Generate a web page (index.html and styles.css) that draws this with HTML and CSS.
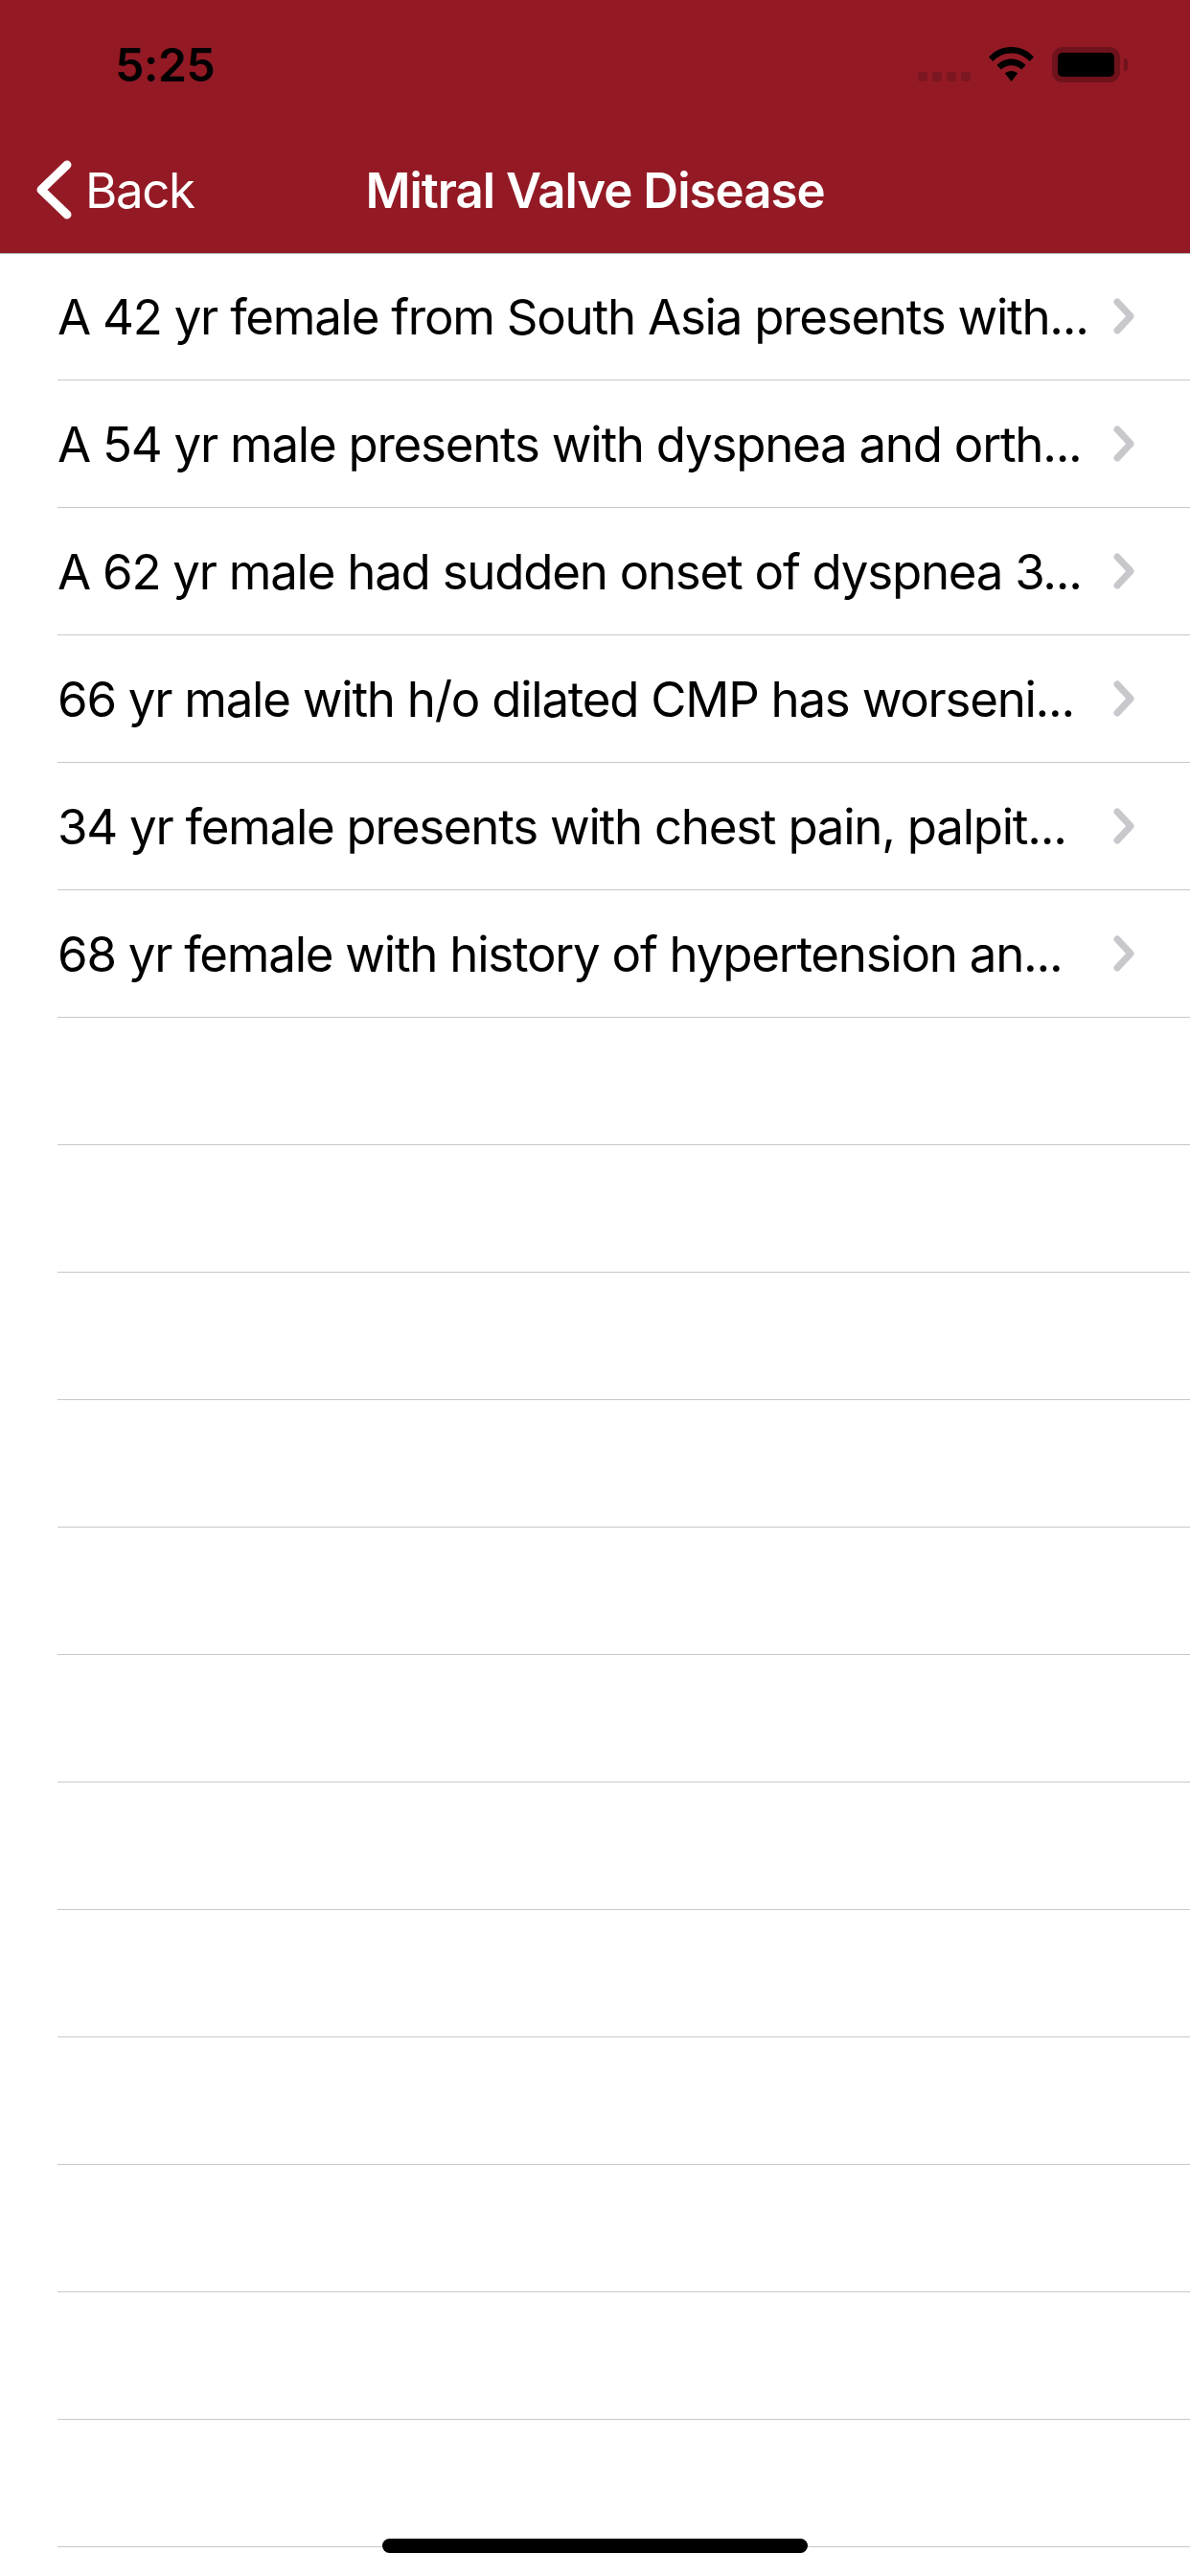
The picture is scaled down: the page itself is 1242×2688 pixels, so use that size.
FILE: index.html
```html
<!DOCTYPE html>
<html lang="en">
<head>
    <meta charset="UTF-8">
    <meta name="viewport" content="width=device-width, initial-scale=1.0">
    <title>Mitral Valve Disease</title>
    <link rel="stylesheet" href="styles.css">
</head>
<body>
    <header class="top-bar">
        <div class="status-bar">
            <span class="clock">5:25</span>
            <div class="status-icons">
                <div class="signal-dots"><i></i><i></i><i></i><i></i></div>
                <svg class="wifi" width="47" height="36" viewBox="0 0 47 36">
                    <path d="M0 10.5C6 4 14 0 23.5 0S41 4 47 10.5L42.6 15C37.6 9.8 31 6.6 23.5 6.6S9.4 9.800 4.400 15Z"/>
                    <path d="M8.400 19C12.400 15 17.600 12.600 23.500 12.600S34.600 15 38.600 19L34.200 23.500C31.400 20.800 27.700 19.200 23.500 19.200S15.600 20.800 12.800 23.500Z"/>
                    <path d="M16.800 27.500C18.600 25.900 20.900 25 23.500 25S28.400 25.900 30.200 27.500L23.500 36Z"/>
                </svg>
                <div class="battery">
                    <div class="battery-level"></div>
                </div>
            </div>
        </div>
        <nav class="nav-bar">
            <a class="back-link">
                <svg class="back-icon" width="37" height="62" viewBox="0 0 37 62">
                    <path d="M32 5L5 31L32 57"/>
                </svg>
                <span>Back</span>
            </a>
            <h1 class="nav-title">Mitral Valve Disease</h1>
        </nav>
    </header>

    <ul class="case-list">
        <li class="case-row"><span>A 42 yr female from South Asia presents with...</span><svg class="chevron" viewBox="0 0 22 38"><path d="M4 4L18 19L4 34"/></svg></li>
        <li class="case-row"><span>A 54 yr male presents with dyspnea and orth...</span><svg class="chevron" viewBox="0 0 22 38"><path d="M4 4L18 19L4 34"/></svg></li>
        <li class="case-row"><span>A 62 yr male had sudden onset of dyspnea 3...</span><svg class="chevron" viewBox="0 0 22 38"><path d="M4 4L18 19L4 34"/></svg></li>
        <li class="case-row"><span>66 yr male with h/o dilated CMP has worseni...</span><svg class="chevron" viewBox="0 0 22 38"><path d="M4 4L18 19L4 34"/></svg></li>
        <li class="case-row"><span>34 yr female presents with chest pain, palpit...</span><svg class="chevron" viewBox="0 0 22 38"><path d="M4 4L18 19L4 34"/></svg></li>
        <li class="case-row"><span>68 yr female with history of hypertension an...</span><svg class="chevron" viewBox="0 0 22 38"><path d="M4 4L18 19L4 34"/></svg></li>
        <li class="case-row"></li>
        <li class="case-row"></li>
        <li class="case-row"></li>
        <li class="case-row"></li>
        <li class="case-row"></li>
        <li class="case-row"></li>
        <li class="case-row"></li>
        <li class="case-row"></li>
        <li class="case-row"></li>
        <li class="case-row"></li>
        <li class="case-row"></li>
        <li class="case-row"></li>
    </ul>

    <div class="home-indicator"></div>
</body>
</html>
```

FILE: styles.css
```css
* {
  box-sizing: border-box;
}
body {
  margin: 0;
  background-color: #fff;
  font-family: "Inter", "Liberation Sans", sans-serif;
  color: #000;
}
.top-bar {
  height: 265px;
  background-color: #931a25;
  border-bottom: 1px solid #b2b2b2;
}
.status-bar {
  display: flex;
  justify-content: space-between;
  height: 132px;
  padding: 49px 73px 0 120px;
}
.clock {
  font-size: 48px;
  font-weight: 600;
  line-height: 38px;
  letter-spacing: -0.4px;
}
.status-icons {
  display: flex;
  align-items: flex-start;
}
.signal-dots {
  display: flex;
  gap: 5px;
  margin-top: 26px;
  margin-right: 19px;
}
.signal-dots i {
  width: 10px;
  height: 10px;
  border-radius: 3px;
  background-color: #7c1620;
}
.wifi {
  display: block;
  fill: #000;
  margin-right: 19px;
}
.battery {
  position: relative;
  width: 71px;
  height: 37px;
  padding: 6px;
  border-radius: 11px;
  background-color: #6f121b;
}
.battery::after {
  content: "";
  position: absolute;
  left: 75px;
  top: 12px;
  width: 4px;
  height: 13px;
  border-radius: 0 7px 7px 0;
  background-color: #6f121b;
}
.battery-level {
  width: 59px;
  height: 25px;
  border-radius: 5px;
  background-color: #000;
}
.nav-bar {
  position: relative;
  display: flex;
  align-items: center;
  justify-content: center;
  height: 132px;
  color: #fff;
}
.back-link {
  position: absolute;
  left: 38px;
  top: 35px;
  display: flex;
  align-items: center;
  gap: 14px;
  font-size: 51px;
  letter-spacing: -1.4px;
}
.back-icon {
  display: block;
  fill: none;
  stroke: #fff;
  stroke-width: 9;
  stroke-linecap: round;
  stroke-linejoin: round;
}
.nav-title {
  margin: 0;
  font-size: 51px;
  font-weight: 600;
  letter-spacing: -1px;
}
.case-list {
  margin: -1px 0 0;
  padding: 0;
  list-style: none;
}
.case-row {
  display: flex;
  align-items: center;
  justify-content: space-between;
  height: 133px;
  margin-left: 60px;
  padding-right: 58px;
  border-bottom: 1px solid #c8c8c8;
  font-size: 51px;
  letter-spacing: -1.25px;
  white-space: nowrap;
}
.chevron {
  display: block;
  flex-shrink: 0;
  width: 22px;
  height: 38px;
  fill: none;
  stroke: #c7c7cc;
  stroke-width: 7;
  stroke-linecap: round;
  stroke-linejoin: round;
}
.home-indicator {
  position: absolute;
  left: 399px;
  top: 2649px;
  width: 444px;
  height: 15px;
  border-radius: 8px;
  background-color: #000;
}
```
